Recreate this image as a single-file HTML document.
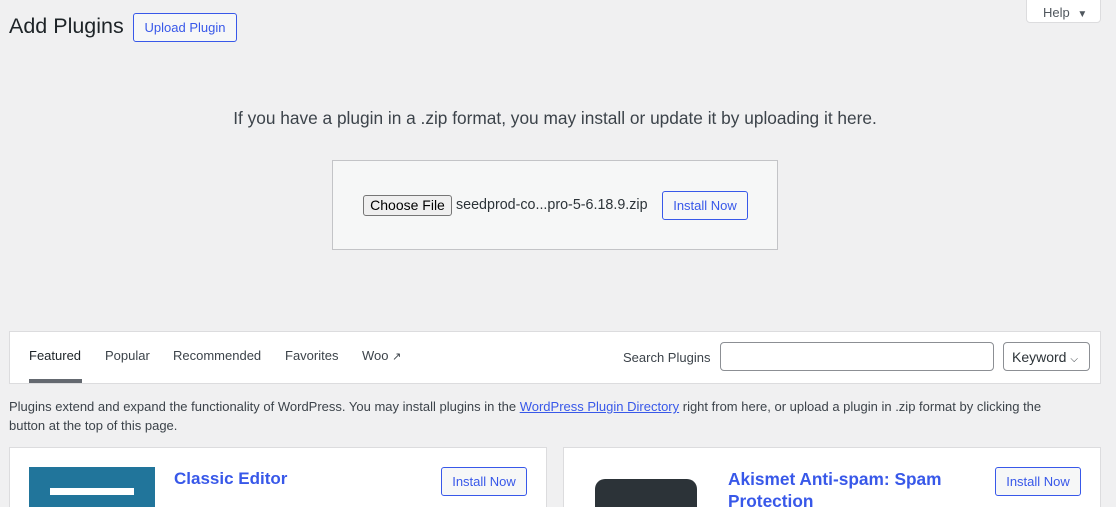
<!DOCTYPE html>
<html><head><meta charset="utf-8"><style>
*{box-sizing:border-box;margin:0;padding:0}
html,body{width:1116px;height:507px;overflow:hidden}
body{background:#f0f0f1;font-family:"Liberation Sans",sans-serif;color:#3c434a;font-size:13px;position:relative}
.abs{position:absolute}
.btn{position:absolute;border:1px solid #3858e9;color:#3858e9;background:#f6f7f7;border-radius:3px;font-size:13px;display:flex;align-items:center;justify-content:center}
a{color:#3858e9}
</style></head><body>
<div class="abs" style="left:9px;top:14px;font-size:21.5px;color:#1d2327">Add Plugins</div>
<div class="btn" style="left:133px;top:13px;width:104px;height:29px">Upload Plugin</div>
<div class="abs" style="left:1026px;top:-4px;width:75px;height:27px;background:#fff;border:1px solid #dcdcde;border-radius:0 0 4px 4px;font-size:13px;color:#50575e;padding:8px 0 0 16px">Help <span style="font-size:10px;margin-left:4px">▼</span></div>
<div class="abs" style="left:0;width:1110px;top:108px;text-align:center;font-size:17.3px;color:#3c434a">If you have a plugin in a .zip format, you may install or update it by uploading it here.</div>
<div class="abs" style="left:332px;top:160px;width:446px;height:90px;border:1px solid #c3c4c7;background:#f6f7f7"></div>
<div class="abs" style="left:363px;top:195px;width:89px;height:21px;border:1px solid #767676;border-radius:3px;background:#efefef;font-size:14px;color:#000;text-align:center;line-height:19px">Choose File</div>
<div class="abs" style="left:456px;top:197px;font-size:14.3px;color:#2c3338">seedprod-co...pro-5-6.18.9.zip</div>
<div class="btn" style="left:662px;top:191px;width:86px;height:29px">Install Now</div>
<div class="abs" style="left:9px;top:331px;width:1092px;height:53px;background:#fff;border:1px solid #dcdcde"></div>
<div class="abs" style="left:29px;top:348px;font-size:13px;color:#1d2327">Featured</div>
<div class="abs" style="left:29px;top:379px;width:53px;height:4px;background:#646970"></div>
<div class="abs" style="left:105px;top:348px">Popular</div>
<div class="abs" style="left:173px;top:348px">Recommended</div>
<div class="abs" style="left:285px;top:348px">Favorites</div>
<div class="abs" style="left:362px;top:348px">Woo <span style="font-size:11px">↗</span></div>
<div class="abs" style="left:623px;top:350px">Search Plugins</div>
<div class="abs" style="left:720px;top:342px;width:274px;height:29px;border:1px solid #8c8f94;border-radius:4px;background:#fff"></div>
<div class="abs" style="left:1003px;top:342px;width:87px;height:29px;border:1px solid #8c8f94;border-radius:4px;background:#fff;font-size:14px;color:#2c3338;padding:6px 0 0 8px">Keyword <span style="font-size:10px">⌵</span></div>
<div class="abs" style="left:9px;top:397px;width:1060px;line-height:19px;font-size:13px">Plugins extend and expand the functionality of WordPress. You may install plugins in the <a href="#">WordPress Plugin Directory</a> right from here, or upload a plugin in .zip format by clicking the button at the top of this page.</div>
<div class="abs" style="left:9px;top:447px;width:538px;height:70px;background:#fff;border:1px solid #dcdcde"></div>
<div class="abs" style="left:29px;top:467px;width:126px;height:50px;background:#21759b"></div>
<div class="abs" style="left:50px;top:488px;width:84px;height:7px;background:#fff"></div>
<div class="abs" style="left:174px;top:469px;font-size:17px;font-weight:bold;color:#3858e9">Classic Editor</div>
<div class="btn" style="left:441px;top:467px;width:86px;height:29px">Install Now</div>
<div class="abs" style="left:563px;top:447px;width:538px;height:70px;background:#fff;border:1px solid #dcdcde"></div>
<div class="abs" style="left:595px;top:479px;width:102px;height:50px;background:#2c3338;border-radius:10px"></div>
<div class="abs" style="left:728px;top:468px;font-size:17.3px;font-weight:bold;color:#3858e9;line-height:22px">Akismet Anti-spam: Spam<br>Protection</div>
<div class="btn" style="left:995px;top:467px;width:86px;height:29px">Install Now</div>
</body></html>
